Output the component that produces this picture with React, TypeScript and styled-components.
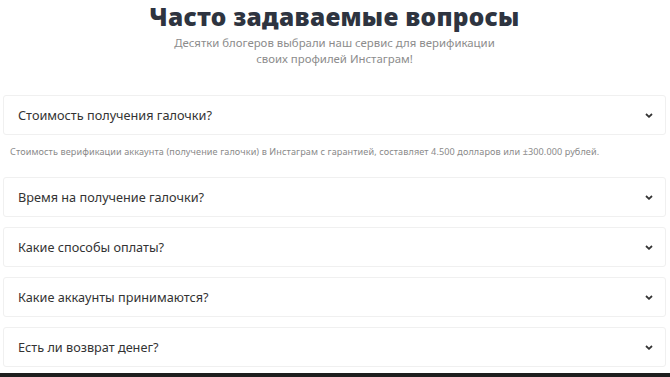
import { useState } from "react";
import styled, { createGlobalStyle } from "styled-components";

const GlobalStyle = createGlobalStyle`
  html, body {
    margin: 0;
    padding: 0;
    background: #fff;
  }
  body {
    font-family: "Noto Sans", "Open Sans", sans-serif;
    color: #333;
  }
`;

const Page = styled.div`
  width: 670px;
  height: 377px;
  overflow: hidden;
  display: flex;
  flex-direction: column;
  align-items: stretch;
  box-sizing: border-box;
  padding: 2px 4px 0 3px;
  border-bottom: 4px solid #1e1e1e;
`;

const Title = styled.h1`
  margin: 0;
  text-align: center;
  font-family: "Noto Sans", sans-serif;
  font-weight: 900;
  font-size: 24.5px;
  line-height: 30px;
  color: #2e3440;
  letter-spacing: 0.3px;
`;

const Subtitle = styled.p`
  margin: 3px auto 0;
  width: 340px;
  text-align: center;
  font-size: 11.4px;
  line-height: 16px;
  color: #8c8c8c;
`;

const List = styled.div`
  margin-top: 28px;
  display: flex;
  flex-direction: column;
  gap: 10px;
`;

const Item = styled.div``;

const Question = styled.button`
  width: 100%;
  height: 40px;
  box-sizing: border-box;
  display: flex;
  align-items: center;
  justify-content: space-between;
  padding: 0 12px 0 14px;
  background: #fff;
  border: 1px solid #f0f0f0;
  border-radius: 3px;
  font-family: inherit;
  font-size: 12.7px;
  color: #333;
  cursor: pointer;
  text-align: left;
`;

const Chevron = styled.svg`
  width: 8px;
  height: 5px;
  flex: none;
`;

const Answer = styled.p`
  margin: 0;
  padding: 10px 7px 8px;
  font-size: 9.1px;
  line-height: 14px;
  letter-spacing: 0.1px;
  color: #8a8a8a;
  white-space: nowrap;
`;

const faq = [
  {
    q: "Стоимость получения галочки?",
    a: "Стоимость верификации аккаунта (получение галочки) в Инстаграм с гарантией, составляет 4.500 долларов или ±300.000 рублей.",
  },
  { q: "Время на получение галочки?", a: "" },
  { q: "Какие способы оплаты?", a: "" },
  { q: "Какие аккаунты принимаются?", a: "" },
  { q: "Есть ли возврат денег?", a: "" },
];

const App = () => {
  const [open, setOpen] = useState(0);

  return (
    <Page>
      <GlobalStyle />
      <Title>Часто задаваемые вопросы</Title>
      <Subtitle>
        Десятки блогеров выбрали наш сервис для верификации своих профилей Инстаграм!
      </Subtitle>
      <List>
        {faq.map((item, i) => (
          <Item key={i}>
            <Question onClick={() => setOpen(open === i ? -1 : i)}>
              {item.q}
              <Chevron viewBox="0 0 8 5">
                <path d="M1 1l3 2.8L7 1" fill="none" stroke="#333" strokeWidth="1.8" />
              </Chevron>
            </Question>
            {open === i && item.a && <Answer>{item.a}</Answer>}
          </Item>
        ))}
      </List>
    </Page>
  );
};

export default App;
